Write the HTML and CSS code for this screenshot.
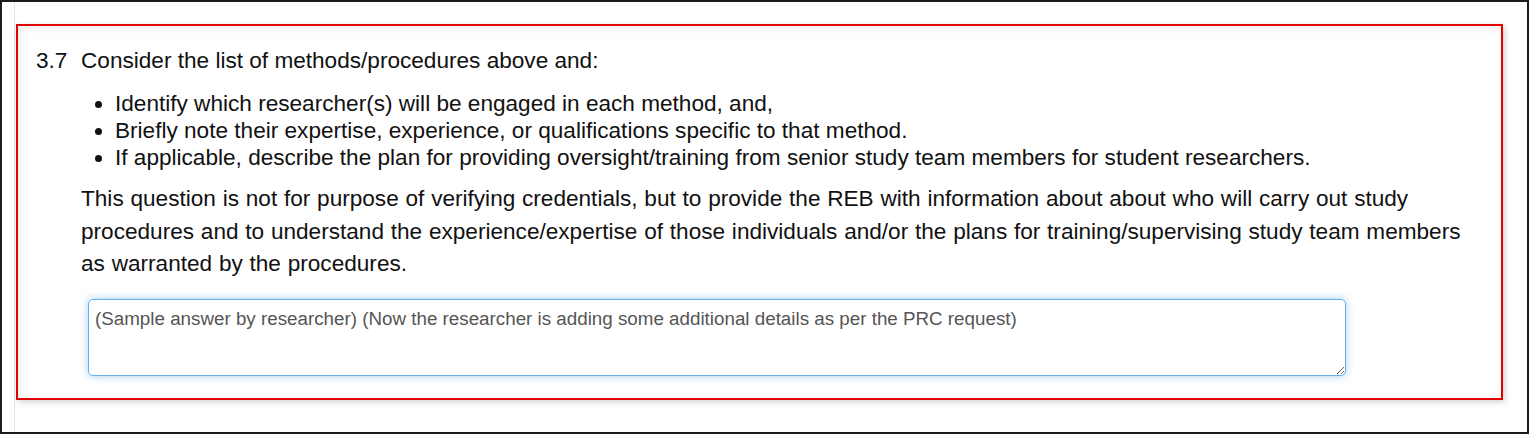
FILE: index.html
```html
<!DOCTYPE html>
<html>
<head>
<meta charset="utf-8">
<link rel="stylesheet" href="styles.css">
</head>
<body>
<div class="frame">
  <div class="page">
    <div class="question">
      <div class="q-num">3.7</div>
      <div class="q-body">
        <div class="q-title">Consider the list of methods/procedures above and:</div>
        <ul class="q-list">
          <li>Identify which researcher(s) will be engaged in each method, and,</li>
          <li>Briefly note their expertise, experience, or qualifications specific to that method.</li>
          <li>If applicable, describe the plan for providing oversight/training from senior study team members for student researchers.</li>
        </ul>
        <p class="q-note">This question is not for purpose of verifying credentials, but to provide the REB with information about about who will carry out study procedures and to understand the experience/expertise of those individuals and/or the plans for training/supervising study team members as warranted by the procedures.</p>
        <textarea class="answer">(Sample answer by researcher) (Now the researcher is adding some additional details as per the PRC request)</textarea>
      </div>
    </div>
  </div>
</div>
</body>
</html>
```
FILE: styles.css
```css
* { box-sizing: border-box; }
html, body { margin: 0; padding: 0; background: #fff; }
body { font-family: "Liberation Sans", Arial, sans-serif; color: #111; }

.frame {
  width: 1529px;
  height: 434px;
  border: 2px solid #1c1c1c;
  padding-left: 12px;
}
.page {
  height: 100%;
  border-left: 1px solid #e6e6e6;
  padding: 22px 0 0 1px;
}
.question {
  height: 376px;
  margin-right: 24px;
  border: 2px solid #e30000;
  box-shadow: 2px 2px 6px rgba(0,0,0,0.18), inset 2px 2px 8px rgba(0,0,0,0.08);
  padding: 21px 18px 0 18px;
  display: grid;
  grid-template-columns: 45px 1fr;
  font-size: 22.6px;
}
.q-num, .q-title { line-height: 27px; }
.q-list {
  margin: 16px 0 0;
  padding-left: 34px;
  line-height: 27px;
}
.q-note {
  margin: 12px 0 0;
  line-height: 32.5px;
  padding-right: 20px;
  word-spacing: 0.5px;
}
.answer {
  display: block;
  margin: 18px 0 0 7px;
  width: 1258px;
  height: 77px;
  border: 1px solid #66afe9;
  border-radius: 5px;
  box-shadow: 0 0 8px rgba(102,175,233,0.6);
  padding: 7px 6px;
  font-family: "Liberation Sans", Arial, sans-serif;
  font-size: 18.8px;
  line-height: 24px;
  color: #555;
  outline: none;
  resize: vertical;
}
```
